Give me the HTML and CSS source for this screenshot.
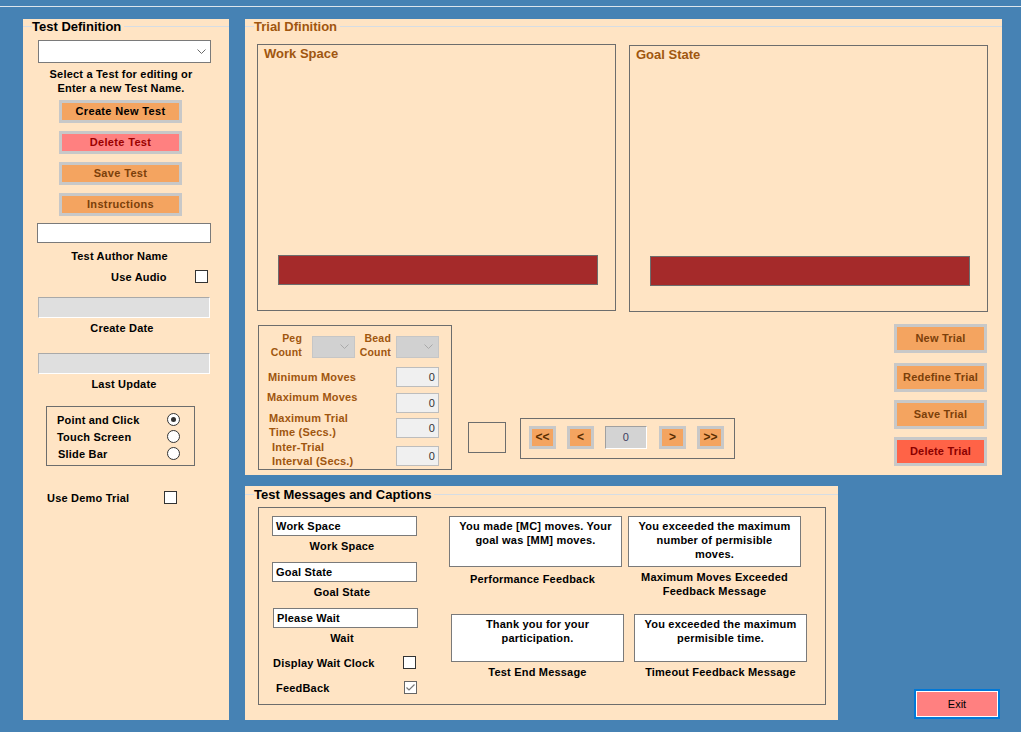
FILE: index.html
```html
<!DOCTYPE html>
<html>
<head>
<meta charset="utf-8">
<title>Test Editor</title>
<link rel="stylesheet" href="styles.css">
</head>
<body>
<div class="topline"></div>
<div class="main">
  <div class="panel left">
    <div class="gtitle"><span>Test Definition</span></div>
    <div class="combo-white"><svg width="9" height="6" viewBox="0 0 9 6"><polyline points="0.5,0.5 4.5,4.5 8.5,0.5" fill="none" stroke="#6a6a6a" stroke-width="1"/></svg></div>
    <div class="hint">Select a Test for editing or<br>Enter a new Test Name.</div>
    <div class="btn first">Create New Test</div>
    <div class="btn pink">Delete Test</div>
    <div class="btn brown">Save Test</div>
    <div class="btn brown">Instructions</div>
    <div class="tb-author"></div>
    <div class="cap cap-author">Test Author Name</div>
    <div class="audio-row"><span class="audio-lbl">Use Audio</span><span class="check"></span></div>
    <div class="graybox first-gray"></div>
    <div class="cap cap-create">Create Date</div>
    <div class="graybox second-gray"></div>
    <div class="cap cap-update">Last Update</div>
    <div class="radiogroup">
      <div class="rrow"><span class="rlbl">Point and Click</span><span class="radio on"></span></div>
      <div class="rrow"><span class="rlbl">Touch Screen</span><span class="radio"></span></div>
      <div class="rrow"><span class="rlbl slide">Slide Bar</span><span class="radio"></span></div>
    </div>
    <div class="demo-row"><span class="demo-lbl">Use Demo Trial</span><span class="check"></span></div>
  </div>

  <div class="rightcol">
    <div class="panel trial">
      <div class="gtitle brownt"><span>Trial Dfinition</span></div>
      <div class="canvases">
        <div class="canvas">
          <div class="canvas-title">Work Space</div>
          <div class="bar"></div>
        </div>
        <div class="canvas goal">
          <div class="canvas-title">Goal State</div>
          <div class="bar"></div>
        </div>
      </div>
      <div class="lower">
        <div class="pegbox">
          <div class="prow1">
            <div class="plbl plbl1">Peg<br>Count</div>
            <div class="dcombo dc1"><svg width="9" height="6" viewBox="0 0 9 6"><polyline points="0.5,0.5 4.5,4.5 8.5,0.5" fill="none" stroke="#a9a9a9" stroke-width="1"/></svg></div>
            <div class="plbl plbl2">Bead<br>Count</div>
            <div class="dcombo dc2"><svg width="9" height="6" viewBox="0 0 9 6"><polyline points="0.5,0.5 4.5,4.5 8.5,0.5" fill="none" stroke="#a9a9a9" stroke-width="1"/></svg></div>
          </div>
          <div class="prow prow2"><span class="rl rl2">Minimum Moves</span><span class="numbox">0</span></div>
          <div class="prow prow3"><span class="rl rl3">Maximum Moves</span><span class="numbox">0</span></div>
          <div class="prow prow4"><span class="rl rl4">Maximum Trial<br>Time (Secs.)</span><span class="numbox">0</span></div>
          <div class="prow prow5"><span class="rl rl5">Inter-Trial<br>Interval (Secs.)</span><span class="numbox">0</span></div>
        </div>
        <div class="square"></div>
        <div class="nav">
          <div class="navbtn">&lt;&lt;</div>
          <div class="navbtn nb2">&lt;</div>
          <div class="navnum">0</div>
          <div class="navbtn nb4">&gt;</div>
          <div class="navbtn nb5">&gt;&gt;</div>
        </div>
        <div class="trialbtns">
          <div class="tbtn">New Trial</div>
          <div class="tbtn t2">Redefine Trial</div>
          <div class="tbtn t3">Save Trial</div>
          <div class="tbtn t4 del">Delete Trial</div>
        </div>
      </div>
    </div>

    <div class="bottomrow">
      <div class="panel messages">
        <div class="gtitle mtitle"><span>Test Messages and Captions</span></div>
        <div class="msgbox">
          <div class="mleft">
            <div class="tb">Work Space</div>
            <div class="tbcap">Work Space</div>
            <div class="tb tbn">Goal State</div>
            <div class="tbcap">Goal State</div>
            <div class="tb tbn tbw">Please Wait</div>
            <div class="tbcap">Wait</div>
            <div class="chkrow"><span class="clbl">Display Wait Clock</span><span class="check"></span></div>
            <div class="chkrow fb"><span class="clbl">FeedBack</span><span class="check gray"><svg width="11" height="11" viewBox="0 0 11 11"><polyline points="1.5,5.5 4,8 9.5,2.5" fill="none" stroke="#777" stroke-width="1.2"/></svg></span></div>
          </div>
          <div class="mright">
            <div class="mrow">
              <div class="cell">
                <div class="mbox">You made [MC] moves. Your<br>goal was [MM] moves.</div>
                <div class="mcap c1">Performance Feedback</div>
              </div>
              <div class="cell">
                <div class="mbox">You exceeded the maximum<br>number of permisible<br>moves.</div>
                <div class="mcap c2">Maximum Moves Exceeded<br>Feedback Message</div>
              </div>
            </div>
            <div class="mrow mrow2">
              <div class="cell">
                <div class="mbox short">Thank you for your<br>participation.</div>
                <div class="mcap c3">Test End Message</div>
              </div>
              <div class="cell">
                <div class="mbox short">You exceeded the maximum<br>permisible time.</div>
                <div class="mcap c3">Timeout Feedback Message</div>
              </div>
            </div>
          </div>
        </div>
      </div>
      <div class="exit">Exit</div>
    </div>
  </div>
</div>
</body>
</html>
```
FILE: styles.css
```css
* { box-sizing: border-box; }
html, body { margin: 0; padding: 0; }
body {
  background: #4682b4;
  width: 1021px;
  height: 732px;
  overflow: hidden;
  font-family: "Liberation Sans", Arial, sans-serif;
  font-size: 11px;
  font-weight: bold;
  letter-spacing: 0.2px;
  color: #000;
}
.topline { height: 1px; margin-top: 6px; background: #dde5ec; }
.main { display: flex; align-items: flex-start; margin-top: 12px; padding-left: 23px; }
.panel { background: #ffe4c4; }

/* group titles */
.gtitle { display: flex; align-items: center; height: 15px; width: 100%; font-size: 13px; letter-spacing: 0; }
.gtitle::before { content: ""; width: 9px; height: 1px; background: #d6dde4; }
.gtitle::after { content: ""; flex: 1; height: 1px; background: #d6dde4; }
.gtitle span { padding-right: 3px; line-height: 15px; }
.brownt { color: #a0560f; }

/* left panel */
.left { width: 206px; height: 701px; display: flex; flex-direction: column; align-items: flex-start; }
.combo-white {
  margin: 6px 0 0 15px; width: 173px; height: 23px;
  border: 1px solid #7a7a7a; background: #fff;
  display: flex; justify-content: flex-end; align-items: center; padding-right: 4px;
}
.hint { margin: 4px 0 0 15px; width: 166px; text-align: center; line-height: 14px; }
.btn {
  width: 123px; height: 23px; margin: 8px 0 0 36px;
  border: 3px solid #c8c8c8; background: #f4a460;
  text-align: center; line-height: 17px; color: #000; letter-spacing: 0.35px;
}
.btn.first { margin-top: 5px; }
.btn.pink { background: #ff8080; color: #9b0000; }
.btn.brown { color: #7b3f0a; }
.tb-author { margin: 7px 0 0 14px; width: 174px; height: 20px; border: 1px solid #7a7a7a; background: #fff; }
.cap { text-align: center; line-height: 14px; }
.cap-author { margin-top: 6px; width: 193px; }
.audio-row { margin: 6px 0 0 88px; display: flex; align-items: center; height: 15px; }
.audio-lbl { width: 84px; }
.check { width: 13px; height: 13px; border: 1px solid #333; background: #fff; display: flex; align-items: center; justify-content: center; }
.check.gray { border-color: #666; }
.graybox {
  margin: 13px 0 0 15px; width: 172px; height: 21px; background: #dfdfdf;
  border-top: 1px solid #a9a9a9; border-left: 1px solid #b5b5b5;
  border-right: 1px solid #fff; border-bottom: 1px solid #fff;
}
.second-gray { margin-top: 18px; }
.cap-create { margin-top: 3px; width: 198px; }
.cap-update { margin-top: 3px; width: 202px; }
.radiogroup { margin: 15px 0 0 23px; width: 149px; height: 60px; border: 1px solid #6d6d6d; padding: 4px 0 0 10px; }
.rrow { display: flex; align-items: center; height: 17px; }
.rlbl { width: 110px; }
.rlbl.slide { padding-left: 1px; }
.radio { width: 13px; height: 13px; border: 1px solid #333; border-radius: 50%; background: #fff; display: flex; align-items: center; justify-content: center; }
.radio.on::after { content: ""; width: 5px; height: 5px; border-radius: 50%; background: #333; }
.demo-row { margin: 24px 0 0 24px; display: flex; align-items: center; height: 15px; }
.demo-lbl { width: 117px; }

/* right column */
.rightcol { margin-left: 16px; display: flex; flex-direction: column; }
.trial { width: 757px; height: 456px; display: flex; flex-direction: column; }
.canvases { display: flex; align-items: flex-start; margin-top: 10px; padding-left: 12px; gap: 13px; }
.canvas { width: 359px; height: 267px; border: 1px solid #6d6d6d; display: flex; flex-direction: column; }
.canvas.goal { margin-top: 1px; }
.canvas-title { font-size: 13px; letter-spacing: 0; color: #a0560f; padding: 1px 0 0 6px; line-height: 15px; }
.bar { margin: auto 0 25px 20px; width: 320px; height: 30px; background: #a52a2a; border: 1px solid #6d6d6d; }

.lower { display: flex; align-items: flex-start; margin-top: 13px; padding-left: 13px; }
.pegbox { width: 194px; height: 145px; border: 1px solid #6d6d6d; padding-top: 5px; color: #a0560f; }
.prow1 { display: flex; align-items: flex-start; height: 28px; }
.plbl { text-align: right; line-height: 14px; font-size: 10.5px; }
.plbl1 { width: 43px; }
.plbl2 { width: 36px; }
.dcombo {
  margin-top: 5px; width: 43px; height: 22px; background: #d1d1d1; border: 1px solid #c6c6c6;
  display: flex; align-items: center; justify-content: flex-end; padding-right: 5px;
}
.dc1 { margin-left: 10px; }
.dc2 { margin-left: 5px; }
.prow { display: flex; align-items: flex-start; padding-right: 12px; }
.prow2 { margin-top: 8px; align-items: center; }
.prow3 { margin-top: 3px; }
.prow4 { margin-top: -2px; }
.prow5 { margin-top: 1px; }
.rl { line-height: 14px; }
.rl2 { margin-left: 9px; }
.rl3 { margin-left: 8px; }
.rl4 { margin-left: 10px; }
.rl5 { margin-left: 13px; }
.numbox {
  margin-left: auto; width: 43px; height: 20px; background: #f0f0f0; border: 1px solid #bdbdbd;
  text-align: right; padding-right: 3px; line-height: 18px; font-weight: normal; color: #333;
}
.prow3 .numbox { margin-top: 3px; }
.prow4 .numbox { margin-top: 7px; }
.prow5 .numbox { margin-top: 6px; }

.square { margin: 97px 0 0 16px; width: 38px; height: 31px; border: 1px solid #6d6d6d; }
.nav { margin: 93px 0 0 14px; width: 215px; height: 41px; border: 1px solid #6d6d6d; display: flex; align-items: flex-start; padding: 7px 0 0 8px; }
.navbtn {
  width: 27px; height: 23px; border: 3px solid #c8c8c8; background: #f4a460;
  text-align: center; line-height: 17px; color: #5a2d00; font-size: 12px; letter-spacing: 0;
}
.nb2 { margin-left: 11px; }
.navnum {
  margin-left: 11px; width: 42px; height: 23px; background: #d3d3d3;
  border-top: 1px solid #a0a0a0; border-left: 1px solid #a0a0a0;
  border-right: 1px solid #fff; border-bottom: 1px solid #fff;
  text-align: center; line-height: 21px; font-weight: normal; color: #404060;
}
.nb4 { margin-left: 12px; }
.nb5 { margin-left: 11px; }
.trialbtns { margin: -1px 15px 0 auto; display: flex; flex-direction: column; }
.tbtn {
  width: 93px; height: 29px; border: 3px solid #c8c8c8; background: #f4a460;
  text-align: center; line-height: 23px; color: #7b3f0a;
}
.t2 { margin-top: 10px; }
.t3 { margin-top: 8px; }
.t4 { margin-top: 8px; }
.tbtn.del { background: #ff6347; color: #8b0000; }

/* bottom */
.bottomrow { display: flex; align-items: flex-start; margin-top: 11px; }
.messages { width: 593px; height: 234px; display: flex; flex-direction: column; }
.mtitle { height: 17px; }
.mtitle span { line-height: 17px; }
.msgbox { margin: 4px 0 0 13px; width: 568px; height: 198px; border: 1px solid #6d6d6d; display: flex; align-items: flex-start; }
.mleft { margin: 8px 0 0 13px; width: 146px; display: flex; flex-direction: column; align-items: flex-start; }
.tb { width: 145px; height: 20px; border: 1px solid #7a7a7a; background: #fff; padding-left: 3px; line-height: 18px; }
.tbn { margin-top: 9px; }
.tbw { margin-left: 1px; }
.tbcap { margin-top: 3px; width: 140px; text-align: center; line-height: 14px; }
.chkrow { margin-top: 10px; display: flex; align-items: center; height: 15px; }
.chkrow .clbl { width: 130px; margin-left: 1px; }
.chkrow.fb .clbl { width: 128px; margin-left: 4px; }
.mright { margin: 8px 0 0 31px; display: flex; flex-direction: column; }
.mrow { display: flex; align-items: flex-start; gap: 6px; }
.mrow2 { margin: 16px 0 0 2px; gap: 10px; }
.cell { width: 173px; display: flex; flex-direction: column; }
.mbox { height: 51px; border: 1px solid #7a7a7a; background: #fff; text-align: center; line-height: 14px; padding-top: 2px; }
.mbox.short { height: 48px; }
.mcap { text-align: center; line-height: 14px; }
.c1 { margin-top: 5px; margin-right: 6px; }
.c2 { margin-top: 3px; }
.c3 { margin-top: 3px; }
.exit {
  margin: 203px 0 0 76px; width: 86px; height: 30px;
  border: 2px solid #0078d7; box-shadow: inset 0 0 0 1px #fff; background: #ff8080;
  text-align: center; line-height: 26px; font-weight: normal; letter-spacing: 0;
}
```
